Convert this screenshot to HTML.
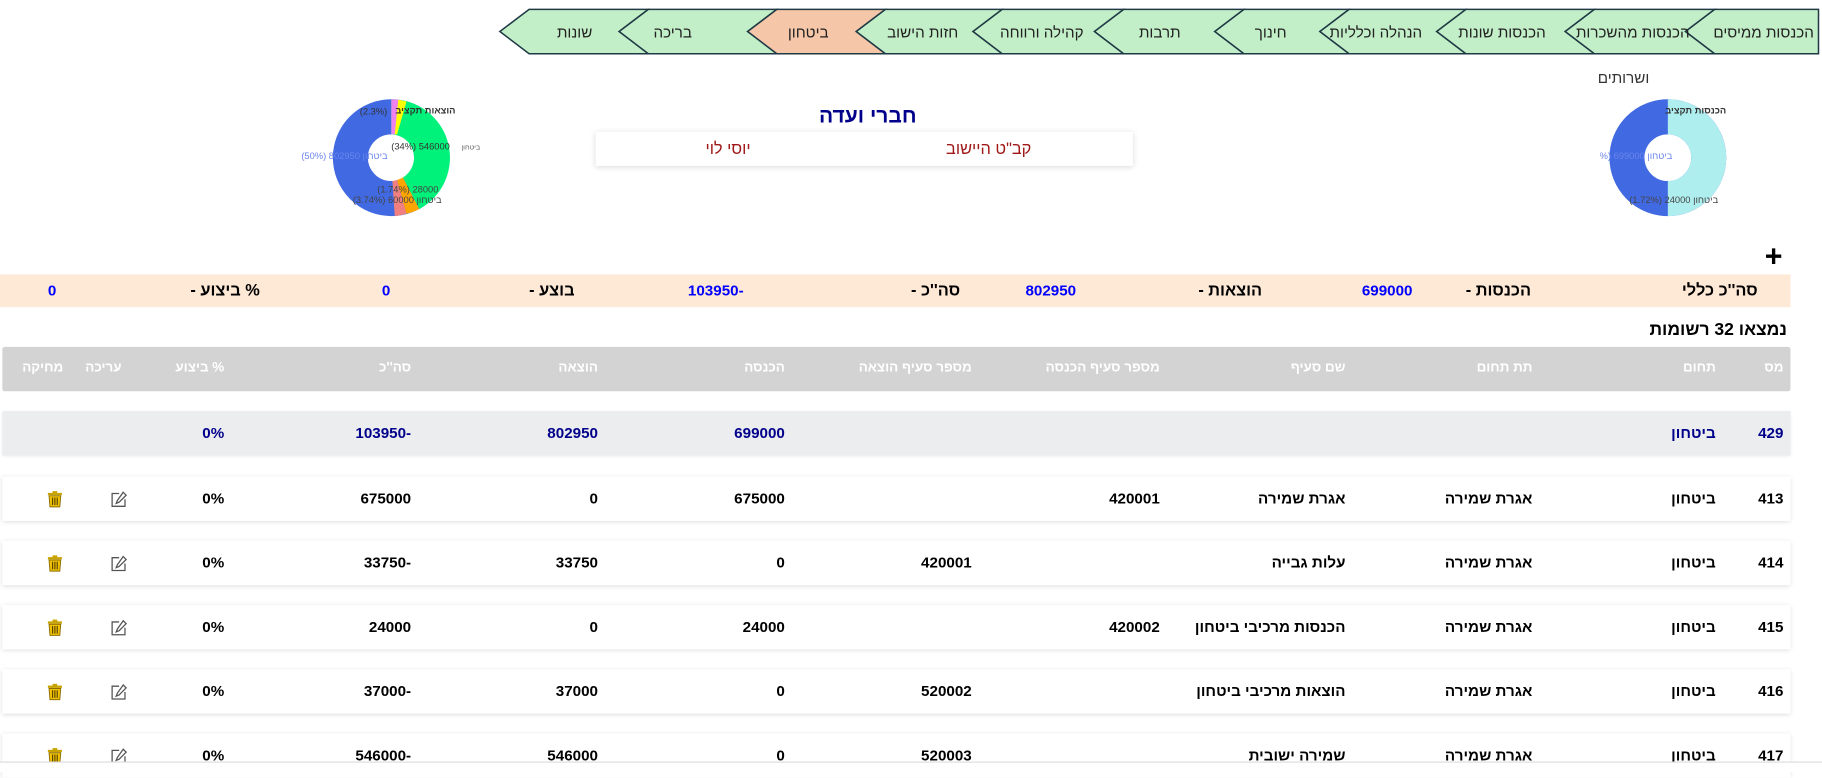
<!DOCTYPE html>
<html><head><meta charset="utf-8">
<style>
html,body{margin:0;padding:0;background:#fff;overflow:hidden;width:1822px;height:771px}
#r{position:absolute;left:0;top:0;width:1560px;height:660px;transform:scale(1.16795);transform-origin:0 0;font-family:"Liberation Sans","DejaVu Sans",sans-serif;}
.a{position:absolute;white-space:nowrap}
.b{font-weight:bold}
.l{direction:rtl}
.n{unicode-bidi:bidi-override;direction:ltr}
.card{position:absolute;left:2px;width:1531px;height:38px;background:#fff;box-shadow:0 1px 4px rgba(0,0,0,.15)}
.cell{position:absolute;top:11px;font-size:13px;font-weight:bold;color:#000;white-space:nowrap;direction:rtl}
.cell.n{direction:ltr;unicode-bidi:bidi-override}
.hd{position:absolute;top:12px;font-size:11.5px;font-weight:bold;color:#fff;white-space:nowrap;direction:rtl}
</style></head><body><div id="r">

<svg class="a" style="left:0;top:0" width="1560" height="60">
 <g stroke="#1f3a45" stroke-width="1.3">
  <polygon points="1443,27 1468,8 1557,8 1557,46 1468,46" fill="#c3efc8"/>
  <polygon points="1340,27 1365,8 1468,8 1443,27 1468,46 1365,46" fill="#c3efc8"/>
  <polygon points="1230,27 1255,8 1365,8 1340,27 1365,46 1255,46" fill="#c3efc8"/>
  <polygon points="1130,27 1155,8 1255,8 1230,27 1255,46 1155,46" fill="#c3efc8"/>
  <polygon points="1040,27 1065,8 1155,8 1130,27 1155,46 1065,46" fill="#c3efc8"/>
  <polygon points="937,27 962,8 1065,8 1040,27 1065,46 962,46" fill="#c3efc8"/>
  <polygon points="833,27 858,8 962,8 937,27 962,46 858,46" fill="#c3efc8"/>
  <polygon points="733,27 758,8 858,8 833,27 858,46 758,46" fill="#c3efc8"/>
  <polygon points="640,27 665,8 758,8 733,27 758,46 665,46" fill="#f5c6a8"/>
  <polygon points="530,27 555,8 665,8 640,27 665,46 555,46" fill="#c3efc8"/>
  <polygon points="428,27 453,8 555,8 530,27 555,46 453,46" fill="#c3efc8"/>
 </g>
 <g font-size="13" fill="#222" text-anchor="middle" font-family="Liberation Sans,DejaVu Sans,sans-serif">
  <text x="1510" y="32">הכנסות ממיסים</text>
  <text x="1398" y="32">הכנסות מהשכרות</text>
  <text x="1286" y="32">הכנסות שונות</text>
  <text x="1178" y="32">הנהלה וכלליות</text>
  <text x="1088" y="32">חינוך</text>
  <text x="993" y="32">תרבות</text>
  <text x="892" y="32">קהילה ורווחה</text>
  <text x="790" y="32">חזות הישוב</text>
  <text x="692" y="32">ביטחון</text>
  <text x="576" y="32">בריכה</text>
  <text x="492" y="32">שונות</text>
 </g>
</svg>

<div class="a" style="left:1368px;top:59px;font-size:13px;color:#333">ושרותים</div>

<svg class="a" style="left:1370px;top:80px" width="120" height="110">
 <circle cx="58" cy="55" r="35" fill="none" stroke="#4169e1" stroke-width="30"/>
 <path d="M58,5 A50,50 0 0 1 58,105 L58,75 A20,20 0 0 0 58,35 Z" fill="#afeeee"/>
 <text x="108" y="17" font-size="8" font-weight="bold" fill="#333" text-anchor="end">הכנסות תקציב</text>
 <text x="-12" y="56" font-size="8" fill="#6a86ee">(50%) 699000 ביטחון</text>
 <text x="25" y="94" font-size="8" fill="#444">(1.72%) 24000 ביטחון</text>
</svg>

<svg class="a" style="left:250px;top:80px" width="170" height="110">
 <circle cx="85" cy="55" r="35" fill="none" stroke="#4169e1" stroke-width="30"/>
 <path d="M85,5 A50,50 0 0 1 109,99 L95,72 A20,20 0 0 0 85,35 Z" fill="#00f27a"/>
 <path d="M109,99 A50,50 0 0 1 98,103 L90,74 A20,20 0 0 0 95,72 Z" fill="#ffa500"/>
 <path d="M98,103 A50,50 0 0 1 88,105 L86,75 A20,20 0 0 0 90,74 Z" fill="#f08080"/>
 <path d="M85,5 A50,50 0 0 1 95,6 L89,35 A20,20 0 0 0 85,35 Z" fill="#ee82ee"/>
 <path d="M91,5.4 A50,50 0 0 1 98,7 L90,35 L88,35 Z" fill="#ffff00"/>
 <text x="140" y="17" font-size="8" font-weight="bold" fill="#333" text-anchor="end">הוצאות תקציב</text>
 <text x="58" y="18" font-size="8" fill="#333">(2.3%)</text>
 <text x="85" y="48" font-size="8" fill="#333">(34%) 546000</text>
 <text x="145" y="48" font-size="6" fill="#666">ביטחון</text>
 <text x="8" y="56" font-size="8" fill="#6a86ee">(50%) 802950 ביטחון</text>
 <text x="73" y="85" font-size="8" fill="#444">(1.74%) 28000</text>
 <text x="52" y="94" font-size="8" fill="#444">(3.74%) 60000 ביטחון</text>
</svg>

<div class="a b" style="left:660px;top:89px;width:166px;text-align:center;font-size:18px;color:#00008b">חברי ועדה</div>
<div class="a" style="left:510px;top:113px;width:460px;height:29px;background:#fff;box-shadow:0 1px 5px rgba(0,0,0,.15)"></div>
<div class="a" style="left:810px;top:119px;font-size:14px;color:#a01818">קב"ט היישוב</div>
<div class="a" style="left:604px;top:119px;font-size:14px;color:#a01818">יוסי לוי</div>

<div class="a b" style="left:1511px;top:204px;font-size:26px">+</div>

<div class="a" style="left:0;top:235px;width:1533px;height:28px;background:#fee8d6"></div>
<div class="a b l" style="left:1440px;top:240px;font-size:14px">סה''כ כללי</div>
<div class="a b l" style="left:1255px;top:240px;font-size:14px">הכנסות -</div>
<div class="a b n" style="left:1166px;top:241px;font-size:13px;color:#0000ff">699000</div>
<div class="a b l" style="left:1026px;top:240px;font-size:14px">הוצאות -</div>
<div class="a b n" style="left:878px;top:241px;font-size:13px;color:#0000ff">802950</div>
<div class="a b l" style="left:780px;top:240px;font-size:14px">סה''כ -</div>
<div class="a b n" style="left:589px;top:241px;font-size:13px;color:#0000ff">103950-</div>
<div class="a b l" style="left:453px;top:240px;font-size:14px">בוצע -</div>
<div class="a b n" style="left:327px;top:241px;font-size:13px;color:#0000ff">0</div>
<div class="a b l" style="left:163px;top:240px;font-size:14px">% ביצוע -</div>
<div class="a b n" style="left:41px;top:241px;font-size:13px;color:#0000ff">0</div>

<div class="a b" style="left:1370px;top:274px;width:160px;text-align:right;font-size:15px;direction:rtl">נמצאו 32 רשומות</div>

<div class="a" style="left:2px;top:297px;width:1531px;height:38px;background:#d3d3d3;border-radius:2px">
 <span class="hd" style="right:6px">מס</span>
 <span class="hd" style="right:64px">תחום</span>
 <span class="hd" style="right:221px">תת תחום</span>
 <span class="hd" style="right:381px">שם סעיף</span>
 <span class="hd" style="right:540px">מספר סעיף הכנסה</span>
 <span class="hd" style="right:701px">מספר סעיף הוצאה</span>
 <span class="hd" style="right:861px">הכנסה</span>
 <span class="hd" style="right:1021px">הוצאה</span>
 <span class="hd" style="right:1181px">סה''כ</span>
 <span class="hd" style="right:1341px">% ביצוע</span>
 <span class="hd" style="left:71px">עריכה</span>
 <span class="hd" style="left:17px">מחיקה</span>
</div>

<div class="card" style="top:352px;background:#ecedef;box-shadow:0 1px 3px rgba(0,0,0,.08)">
 <span class="cell n" style="right:6px;color:#00008b">429</span>
 <span class="cell" style="right:64px;color:#00008b">ביטחון</span>
 <span class="cell n" style="right:861px;color:#00008b">699000</span>
 <span class="cell n" style="right:1021px;color:#00008b">802950</span>
 <span class="cell n" style="right:1181px;color:#00008b">103950-</span>
 <span class="cell n" style="right:1341px;color:#00008b">0%</span>
</div>

<svg width="0" height="0" style="position:absolute">
 <defs>
  <g id="tr"><rect x="1" y="2" width="12" height="2" fill="#c9a400"/><rect x="5" y="0.5" width="4" height="2" fill="#c9a400"/><path d="M2,4.5 H12 L11.2,14 H2.8 Z" fill="#f2c200" stroke="#8a6d00" stroke-width="0.8"/><path d="M5,6 V12.5 M7,6 V12.5 M9,6 V12.5" stroke="#5a4500" stroke-width="1"/></g>
  <g id="ed" fill="none" stroke="#555" stroke-width="1.1"><path d="M8,2.5 H2 V13.5 H13 V7.5"/><path d="M11.5,1.5 L14,4 L8,10 L5.5,11 L6.5,8.5 Z"/></g>
 </defs>
</svg>

<div class="card" style="top:408px">
 <span class="cell n" style="right:6px">413</span><span class="cell" style="right:64px">ביטחון</span>
 <span class="cell" style="right:221px">אגרת שמירה</span><span class="cell" style="right:381px">אגרת שמירה</span>
 <span class="cell n" style="right:540px">420001</span>
 <span class="cell n" style="right:861px">675000</span><span class="cell n" style="right:1021px">0</span>
 <span class="cell n" style="right:1181px">675000</span><span class="cell n" style="right:1341px">0%</span>
 <svg class="a" style="left:92px;top:12px" width="15" height="15"><use href="#ed"/></svg>
 <svg class="a" style="left:38px;top:12px" width="15" height="15"><use href="#tr"/></svg>
</div>
<div class="card" style="top:463px">
 <span class="cell n" style="right:6px">414</span><span class="cell" style="right:64px">ביטחון</span>
 <span class="cell" style="right:221px">אגרת שמירה</span><span class="cell" style="right:381px">עלות גבייה</span>
 <span class="cell n" style="right:701px">420001</span>
 <span class="cell n" style="right:861px">0</span><span class="cell n" style="right:1021px">33750</span>
 <span class="cell n" style="right:1181px">33750-</span><span class="cell n" style="right:1341px">0%</span>
 <svg class="a" style="left:92px;top:12px" width="15" height="15"><use href="#ed"/></svg>
 <svg class="a" style="left:38px;top:12px" width="15" height="15"><use href="#tr"/></svg>
</div>
<div class="card" style="top:518px">
 <span class="cell n" style="right:6px">415</span><span class="cell" style="right:64px">ביטחון</span>
 <span class="cell" style="right:221px">אגרת שמירה</span><span class="cell" style="right:381px">הכנסות מרכיבי ביטחון</span>
 <span class="cell n" style="right:540px">420002</span>
 <span class="cell n" style="right:861px">24000</span><span class="cell n" style="right:1021px">0</span>
 <span class="cell n" style="right:1181px">24000</span><span class="cell n" style="right:1341px">0%</span>
 <svg class="a" style="left:92px;top:12px" width="15" height="15"><use href="#ed"/></svg>
 <svg class="a" style="left:38px;top:12px" width="15" height="15"><use href="#tr"/></svg>
</div>
<div class="card" style="top:573px">
 <span class="cell n" style="right:6px">416</span><span class="cell" style="right:64px">ביטחון</span>
 <span class="cell" style="right:221px">אגרת שמירה</span><span class="cell" style="right:381px">הוצאות מרכיבי ביטחון</span>
 <span class="cell n" style="right:701px">520002</span>
 <span class="cell n" style="right:861px">0</span><span class="cell n" style="right:1021px">37000</span>
 <span class="cell n" style="right:1181px">37000-</span><span class="cell n" style="right:1341px">0%</span>
 <svg class="a" style="left:92px;top:12px" width="15" height="15"><use href="#ed"/></svg>
 <svg class="a" style="left:38px;top:12px" width="15" height="15"><use href="#tr"/></svg>
</div>
<div class="card" style="top:628px">
 <span class="cell n" style="right:6px">417</span><span class="cell" style="right:64px">ביטחון</span>
 <span class="cell" style="right:221px">אגרת שמירה</span><span class="cell" style="right:381px">שמירה ישובית</span>
 <span class="cell n" style="right:701px">520003</span>
 <span class="cell n" style="right:861px">0</span><span class="cell n" style="right:1021px">546000</span>
 <span class="cell n" style="right:1181px">546000-</span><span class="cell n" style="right:1341px">0%</span>
 <svg class="a" style="left:92px;top:12px" width="15" height="15"><use href="#ed"/></svg>
 <svg class="a" style="left:38px;top:12px" width="15" height="15"><use href="#tr"/></svg>
</div>
<div class="a" style="left:0;top:652px;width:1560px;height:8px;background:#fff;border-top:1px solid #ddd"></div>
</div></body></html>
